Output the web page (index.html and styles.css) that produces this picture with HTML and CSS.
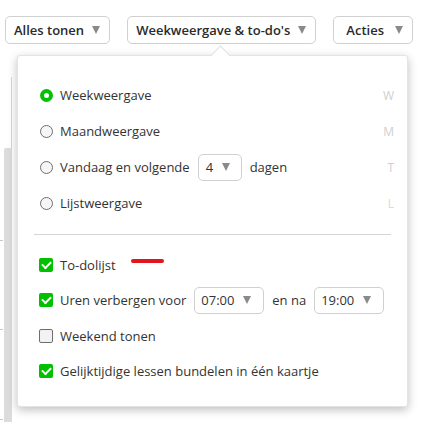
FILE: index.html
```html
<!DOCTYPE html>
<html lang="nl">
<head>
<meta charset="utf-8">
<link rel="stylesheet" href="styles.css">
</head>
<body>
<div class="bg-line"></div>
<div class="bg-scroll"></div>
<div class="bg-dot d1"></div>
<div class="bg-dot d2"></div>
<div class="bg-dot d3"></div>

<div class="toolbar">
  <button class="btn">Alles tonen <span class="caret"></span></button>
  <button class="btn">Weekweergave &amp; to-do's <span class="caret"></span></button>
  <button class="btn btn-acties">Acties <span class="caret"></span></button>
</div>

<div class="popup">
  <div class="arrow"></div>
  <div class="group">
    <div class="row"><span class="radio on"></span><span class="label">Weekweergave</span><span class="key">W</span></div>
    <div class="row"><span class="radio"></span><span class="label">Maandweergave</span><span class="key">M</span></div>
    <div class="row"><span class="radio"></span><span class="label">Vandaag en volgende</span><span class="select sel-n">4 <span class="caret"></span></span><span class="label">dagen</span><span class="key">T</span></div>
    <div class="row"><span class="radio"></span><span class="label">Lijstweergave</span><span class="key peach">L</span></div>
  </div>
  <div class="divider"></div>
  <div class="group checks">
    <div class="row"><span class="check on"></span><span class="label">To-dolijst</span><span class="redmark"></span></div>
    <div class="row"><span class="check on"></span><span class="label">Uren verbergen voor</span><span class="select sel-t">07:00 <span class="caret"></span></span><span class="label">en na</span><span class="select sel-t">19:00 <span class="caret"></span></span></div>
    <div class="row"><span class="check"></span><span class="label">Weekend tonen</span></div>
    <div class="row"><span class="check on"></span><span class="label">Gelijktijdige lessen bundelen in één kaartje</span></div>
  </div>
</div>
</body>
</html>
```

FILE: styles.css
```css
html, body {
  margin: 0;
  padding: 0;
  background: #ffffff;
  font-family: "Open Sans", "Liberation Sans", sans-serif;
  color: #333333;
  width: 425px;
  height: 422px;
  overflow: hidden;
  position: relative;
}

.bg-line {
  position: absolute;
  left: 11px;
  top: 77px;
  width: 1px;
  height: 345px;
  background: #d6d6d6;
}
.bg-scroll {
  position: absolute;
  left: 4px;
  top: 148px;
  width: 8px;
  height: 274px;
  background: #dcdcdc;
  border-radius: 2px 2px 0 0;
}
.bg-dot {
  position: absolute;
  left: 0;
  width: 3px;
  height: 1px;
  background: #c8c8c8;
}
.d1 { top: 240px; }
.d2 { top: 329px; }
.d3 { top: 419px; }

.toolbar {
  display: flex;
  gap: 17px;
  padding: 16px 0 0 5px;
}

.btn {
  height: 28px;
  box-sizing: border-box;
  border: 1px solid #d0d0d0;
  border-radius: 5px;
  background: #ffffff;
  font-family: "Open Sans", "Liberation Sans", sans-serif;
  font-weight: 600;
  font-size: 13px;
  color: #2a2a2a;
  padding: 0 9px 0 8px;
  display: flex;
  align-items: center;
  gap: 8px;
}
.btn-acties { padding-left: 12px; gap: 11px; }

.caret {
  display: inline-block;
  width: 0;
  height: 0;
  border-left: 4.5px solid transparent;
  border-right: 4.5px solid transparent;
  border-top: 8px solid #8a8a8a;
  flex: none;
}

.popup {
  position: absolute;
  left: 17px;
  top: 55px;
  width: 391px;
  height: 352px;
  box-sizing: border-box;
  background: #ffffff;
  border-radius: 3px;
  border: 1px solid #e4e4e4;
  box-shadow: 0 3px 10px rgba(0, 0, 0, 0.25);
  padding: 21px 16px 0 16px;
}

.arrow {
  position: absolute;
  left: 196px;
  top: -8px;
  width: 12px;
  height: 12px;
  background: #ffffff;
  border-left: 1px solid #e0e0e0;
  border-top: 1px solid #e0e0e0;
  transform: rotate(45deg);
}

.group {
  display: flex;
  flex-direction: column;
}

.row {
  height: 36px;
  display: flex;
  align-items: center;
  padding-left: 5px;
  font-size: 13px;
  position: relative;
}
.checks .row { height: 35.5px; }

.label { margin-left: 8px; white-space: nowrap; }
.radio + .label { margin-left: 7px; }
.check + .label { margin-left: 7px; }

.radio {
  width: 13px;
  height: 13px;
  box-sizing: border-box;
  border-radius: 50%;
  border: 1px solid #6e6e6e;
  background: #f6f6f6;
  flex: none;
  margin-left: 1px;
}
.radio.on {
  border: 4px solid #00c400;
  background: #ffffff;
}

.check {
  width: 14px;
  height: 14px;
  box-sizing: border-box;
  border-radius: 2px;
  border: 1px solid #6e6e6e;
  background: #f2f2f2;
  flex: none;
  position: relative;
}
.check.on {
  border: none;
  background: #00c000;
}
.check.on::after {
  content: "";
  position: absolute;
  left: 3px;
  top: 3px;
  width: 7px;
  height: 4px;
  border-left: 2px solid #ffffff;
  border-bottom: 2px solid #ffffff;
  transform: rotate(-45deg);
}

.key {
  margin-left: auto;
  margin-right: -3px;
  font-size: 12px;
  color: #cfcfcf;
}
.key.peach { color: #e6d6cc; }

.select {
  height: 27px;
  box-sizing: border-box;
  border: 1px solid #d0d0d0;
  border-radius: 5px;
  display: flex;
  align-items: center;
  gap: 9px;
  padding: 0 7px 0 7px;
  margin-left: 8px;
  font-size: 13px;
}
.sel-n { width: 44px; }
.sel-t { width: 70px; padding-left: 6px; }

.redmark {
  position: absolute;
  left: 97px;
  top: 12px;
  width: 33px;
  height: 4px;
  border-radius: 2px;
  background: #e3141b;
}

.divider {
  height: 1px;
  background: #d4d4d4;
  margin: 13px 0 12px 0;
}
```
